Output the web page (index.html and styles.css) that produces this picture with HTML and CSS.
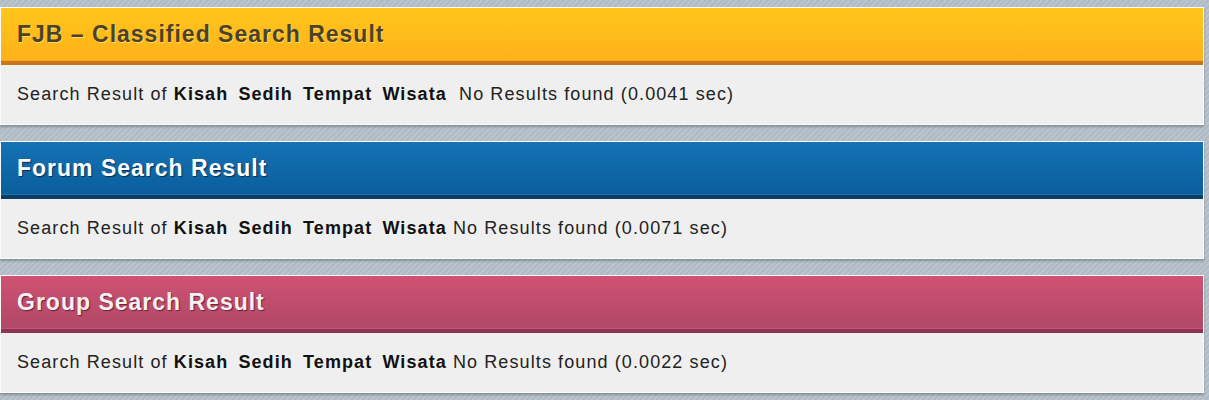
FILE: index.html
```html
<!DOCTYPE html>
<html lang="en">
<head>
    <meta charset="UTF-8">
    <title>Search Result</title>
    <link rel="stylesheet" href="styles.css">
</head>
<body>
<div class="wrap">
    <div class="box fjb">
        <h2 class="head">FJB &ndash; Classified Search Result</h2>
        <p class="info">Search Result of <b>Kisah Sedih Tempat Wisata</b>&nbsp; No Results found (0.0041 sec)</p>
    </div>
    <div class="box forum">
        <h2 class="head">Forum Search Result</h2>
        <p class="info">Search Result of <b>Kisah Sedih Tempat Wisata</b> No Results found (0.0071 sec)</p>
    </div>
    <div class="box group">
        <h2 class="head">Group Search Result</h2>
        <p class="info">Search Result of <b>Kisah Sedih Tempat Wisata</b> No Results found (0.0022 sec)</p>
    </div>
</div>
</body>
</html>
```

FILE: styles.css
```css
*{
    margin: 0;
    padding: 0;
}
body{
    background: #b5c0c8 repeating-linear-gradient(135deg, #b9c4cc 0, #b9c4cc 2px, #afbac2 2px, #afbac2 4px);
    font-family: "Liberation Sans", Arial, sans-serif;
    height: 400px;
    overflow: hidden;
}
.wrap{
    display: flex;
    flex-direction: column;
    gap: 16px;
    padding: 7px 5px 0 0;
}
.box{
    border: 1px solid #fafafa;
    background: #efefef;
    box-shadow: 0 2px 2px rgba(80, 90, 100, .45);
}
.head{
    height: 53px;
    line-height: 53px;
    padding-left: 16px;
    font-size: 23px;
    letter-spacing: 1px;
    font-weight: bold;
    border-bottom: 4px solid;
}
.info{
    height: 59px;
    line-height: 58px;
    padding-left: 16px;
    font-size: 18px;
    letter-spacing: 1.1px;
    color: #222;
}
.info b{
    color: #111;
    word-spacing: 4px;
}
.fjb .head{
    color: #4e4224;
    text-shadow: 1px 1px 0 rgba(255, 230, 150, .7);
    background: linear-gradient(#ffc61c, #ffb11a);
    border-color: #c9751c;
    box-shadow: inset 0 -1px 0 #f4a52a;
}
.forum .head{
    color: #fff;
    text-shadow: 1px 1px 1px rgba(0, 30, 60, .8);
    background: linear-gradient(#1472b6, #0b5e9b);
    border-color: #0b3c64;
    box-shadow: inset 0 -1px 0 #276ea6;
}
.group .head{
    color: #f6f0f2;
    text-shadow: 1px 1px 1px rgba(90, 20, 40, .8);
    background: linear-gradient(#cf5272, #b14767);
    border-color: #8d3450;
    box-shadow: inset 0 -1px 0 #c05577;
}
```
